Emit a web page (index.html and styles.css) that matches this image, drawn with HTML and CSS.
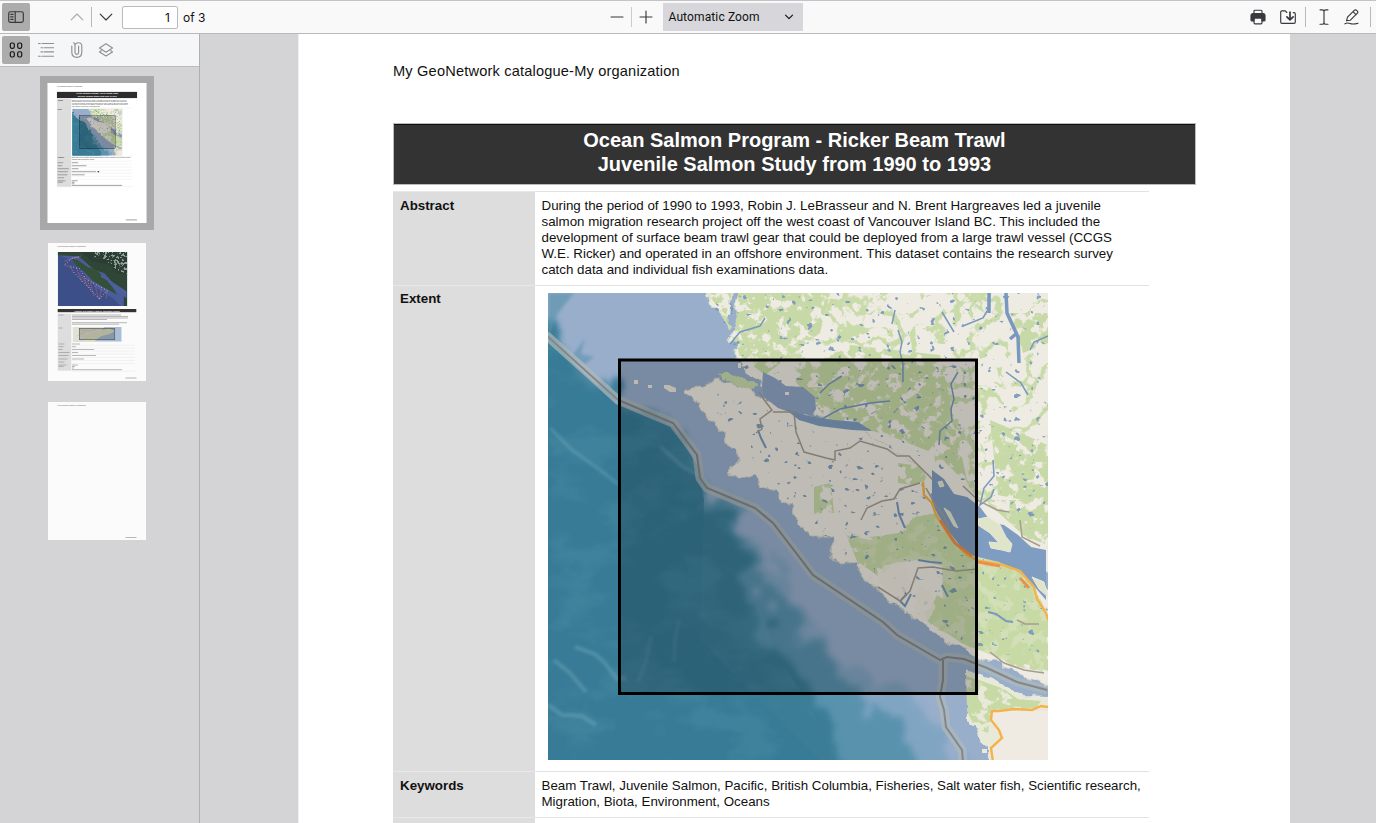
FILE: index.html
```html
<!DOCTYPE html>
<html lang="en">
<head>
<meta charset="utf-8">
<title>My GeoNetwork catalogue</title>
<link rel="stylesheet" href="styles.css">
</head>
<body>
<header class="toolbar">
  <div class="tools tools-left">
    <button class="icon-btn active" aria-label="Toggle sidebar"><svg viewBox="0 0 16 16"><rect x=".7" y="2.7" width="14.6" height="10.6" rx="1.8"/><path d="M7.2 2.7v10.6M2.7 5.3h2.4M2.7 7.8h2.4M2.7 10.3h2.4"/></svg></button>
    <button class="icon-btn previous" aria-label="Previous"><svg viewBox="0 0 16 16"><path d="M2.2 10.8 8 5l5.8 5.8"/></svg></button>
    <span class="separator"></span>
    <button class="icon-btn next" aria-label="Next"><svg viewBox="0 0 16 16"><path d="m2.2 5.2 5.8 5.8 5.8-5.8"/></svg></button>
    <span class="page-input">1</span><span class="page-count">of 3</span>
  </div>
  <div class="tools tools-middle">
    <button class="icon-btn zoom-btn" aria-label="Zoom out"><svg viewBox="0 0 16 16"><path d="M2 8h12"/></svg></button>
    <span class="separator pale"></span>
    <button class="icon-btn zoom-btn" aria-label="Zoom in"><svg viewBox="0 0 16 16"><path d="M2 8h12M8 2v12"/></svg></button>
    <span class="zoom-select"><span>Automatic Zoom</span><svg viewBox="0 0 10 10"><path d="m1.500 3.200 3.500 3.500 3.500-3.500"/></svg></span>
  </div>
  <div class="tools tools-right">
    <button class="icon-btn" aria-label="Print"><svg viewBox="0 0 16 16"><path class="solid" d="M3 4.5h10a2 2 0 0 1 2 2V11a1 1 0 0 1-1 1h-2V9H4v3H2a1 1 0 0 1-1-1V6.500a2 2 0 0 1 2-2z"/><path d="M4 4.500V2.200q0-1 1-1h6q1 0 1 1v2.300M4 9h8v4.800q0 1-1 1H5q-1 0-1-1z"/></svg></button>
    <button class="icon-btn save" aria-label="Save"><svg viewBox="0 0 16 16"><path d="M6.800 3.500 5.300 1.800H2q-1.300 0-1.300 1.300v9.800q0 1.400 1.300 1.400h12q1.300 0 1.300-1.400V5q0-1.400-1.300-1.400h-.8"/><path class="heavy" d="M10 3v7.500M6.900 7.800 10 10.900l3.100-3.100"/></svg></button>
    <span class="separator"></span>
    <button class="icon-btn cursor" aria-label="Text"><svg viewBox="0 0 16 16"><path d="M4 .8h2q2 0 2 1.800v10.800q0 1.800-2 1.800H4M12 .8h-2q-2 0-2 1.800M12 15.200h-2q-2 0-2-1.800"/></svg></button>
    <button class="icon-btn" aria-label="Draw"><svg viewBox="0 0 16 16"><path d="m2.500 11.800 1-3.600 7-7q1-.8 2 .1l.9.9q.9 1 0 2l-7 7zM9 2.700l3 3M1 14.800q2-1.500 5-.3t8-.3"/></svg></button>
    <span class="separator"></span>
  </div>
</header>

<div class="viewer">
  <aside class="sidebar">
    <nav class="side-tabs">
      <button class="icon-btn active tiles" aria-label="Thumbnails"><svg viewBox="0 0 16 16"><rect x="2.300" y="1" width="4" height="5.300" rx="1.500"/><rect x="9.700" y="1" width="4" height="5.300" rx="1.500"/><rect x="2.300" y="9.700" width="4" height="5.300" rx="1.500"/><rect x="9.700" y="9.700" width="4" height="5.300" rx="1.500"/></svg></button>
      <button class="icon-btn muted" aria-label="Outline"><svg viewBox="0 0 16 16"><path d="M.3 1.500h2M4 1.500h12M3 5.700h2M6.500 5.700H16M3 9.900h2M6.500 9.900H16M.3 14.200h2M4 14.200h12"/></svg></button>
      <button class="icon-btn muted" aria-label="Attachments"><svg viewBox="0 0 16 16"><path d="M10.600 4v6.500q0 1.900-1.800 1.900T7 10.500V3.700q0-3-1.600-3M7 4q0-3.300 3.400-3.300T13.800 4v6q0 5.300-5 5.300T3.800 10V4"/></svg></button>
      <button class="icon-btn muted" aria-label="Layers"><svg viewBox="0 0 16 16"><path d="M8 1.800 14.500 6 8 10.200 1.500 6zM3.200 8.700 1.500 9.900 8 14l6.500-4.100-1.700-1.200"/></svg></button>
    </nav>
    <div class="thumbs">
      <div class="thumb-frame selected">
        <svg class="thumb" viewBox="298.500 34 992 1403">
          <rect x="298" y="34" width="993" height="1403" fill="#fff"/>
          <text x="393" y="76" class="t-body">My GeoNetwork catalogue-My organization</text>
          <rect x="393" y="123" width="803" height="62" fill="#2c2c2c"/>
          <text x="795" y="148" class="t-title">Ocean Salmon Program - Ricker Beam Trawl</text>
          <text x="795" y="172" class="t-title">Juvenile Salmon Study from 1990 to 1993</text>
          <rect x="393" y="191" width="142" height="882" fill="#ddd"/>
          <g class="t-body">
            <text x="541" y="210">During the period of 1990 to 1993, Robin J. LeBrasseur and N. Brent Hargreaves led a juvenile</text>
            <text x="541" y="226">salmon migration research project off the west coast of Vancouver Island BC. This included the</text>
            <text x="541" y="242">development of surface beam trawl gear that could be deployed from a large trawl vessel (CCGS</text>
            <text x="541" y="258">W.E. Ricker) and operated in an offshore environment. This dataset contains the research survey</text>
            <text x="541" y="274">catch data and individual fish examinations data.</text>
            <text x="541" y="790">Beam Trawl, Juvenile Salmon, Pacific, British Columbia, Fisheries, Salt water fish, Scientific research,</text>
            <text x="541" y="806">Migration, Biota, Environment, Oceans</text>
          </g>
          <g class="t-body t-bold"><text x="400" y="210">Abstract</text><text x="400" y="304">Extent</text><text x="400" y="790">Keywords</text></g>
          <use href="#coast-map" x="548" y="293" width="500" height="467"/>
          <g stroke="#8a8a8a" stroke-width="8"><path d="M400 833h56M400 863h46M400 893h112M400 923h104M400 954h98M400 984h65M400 1014h78M400 1029h53M541 833h64M541 863h148M541 893h68M541 923h245M541 954h130M541 1014h60M541 1029h30M541 1044h25M541 1060h505M1084 1406h112"/></g>
          <path d="M800 916h16v14h-16z" fill="#444"/>
          <path d="M393 191h756M393 285h756M393 771h756M393 817h756M393 846h756M393 877h756M393 908h756M393 938h756M393 969h756M393 999h756M393 1073h756" stroke="#ddd" stroke-width="3"/>
        </svg>
      </div>
      <div class="thumb-frame">
        <svg class="thumb" viewBox="0 0 98 138">
          <rect width="98" height="138" fill="#fbfbfb"/>
          <text x="9.500" y="4" class="t-mini">My GeoNetwork catalogue-My organization</text>
          <svg x="9.700" y="9" width="69.600" height="54" viewBox="0 0 208 162">
            <rect width="208" height="162" fill="#3c4f88"/>
            <path d="M0 0h208v162h-20l-20-22-50-30-30-30-24-44L30 20 0 8z" fill="#4a5c99"/>
            <path d="M0 0h208v162h-10V128l-28-30-30-34-30-10-15-13L76 24 62 13 0 10z" fill="#2f4636"/>
            <path d="M40 20l20 4 30 22 20 4 30 24 24 30 14 24-30-16-44-26-26-28-24-20z" fill="#355038"/>
            <path d="m130 66 34 24 42 28v20l-26-14-34-40-18-10z" fill="#4b5f9d"/>
            <path d="M72 0h136v68l-30-6-24-24-54-12z" fill="#2c3e34"/>
            <g fill="#8fa097" filter="url(#snow)"><path d="M110 0h98v65l-32-10-30-28-36-10z"/></g>
            <path d="M20 27l48-15M18 38l28 12M40 49l8 15M56 48l16 42M66 64l18 30M77 72l13 34M88 82l12 37M98 93l10 38M112 101l10 38M130 110l-4 32M148 116l-2 22" stroke="#d36d7b" stroke-width="2.500" stroke-dasharray="3 3"/>
            <path d="M22 37 43 18l24-3M38 43l27 7 20 31 30 17 34 18-25 25M48 61l30 31 35 36 13 14" fill="none" stroke="#f2dfe2" stroke-width="3" stroke-dasharray="2 7"/>
          </svg>
          <rect x="9.700" y="66" width="78.600" height="3.200" fill="#333"/>
          <text x="49" y="68.500" class="t-mini t-white">Outdoor Recreation Features, Maritimes Region</text>
          <rect x="9.700" y="70.700" width="13.600" height="57" fill="#ddd"/>
          <svg x="24.700" y="84" width="49" height="14.700" viewBox="0 0 147 44"><rect width="147" height="44" fill="#a9bfd6"/><path d="M0 0h95l-8 11-23 8-25 13-19 12H0z" fill="#e1e2d3"/><path d="m24 44 20-18 35-13 28-9 20 8-16 9-27 7-21 16z" fill="#dfe3c4"/><path d="m20 8 30 4 25-7M10 28l27-14" stroke="#d6ad79" fill="none"/><rect x="20" y="4" width="106" height="34" fill="#0003" stroke="#555" stroke-width="2"/></svg>
          <path d="M10.500 72h5M10.500 85h4M10.500 101h6M10.500 103.700h5M10.500 106.500h4M10.500 109.500h11M10.500 112.500h10M10.500 116h9M10.500 119h6M10.500 122h8M10.500 123.500h5M24 72h49M24 73.500h56M24 75h56M24 76.500h35M24 79.700h55M24 81.200h47M24 101h8M24 103.700h4M24 106.500h22M24 109.500h6M24 112.500h24M24 116h12M24 122h6M24 123.500h3M24 125h2M24 126.700h50M77.500 135h11" stroke="#999" stroke-width=".7"/>
          <path d="M24 102.300h63M24 105.100h63M24 108h63M24 111h63M24 114.500h63M24 117.500h63M24 120.500h63M24 128h63" stroke="#ddd" stroke-width=".3"/>
        </svg>
      </div>
      <div class="thumb-frame">
        <svg class="thumb" viewBox="0 0 98 138"><rect width="98" height="138" fill="#fbfbfb"/><text x="9.500" y="4" class="t-mini">My GeoNetwork catalogue-My organization</text><path d="M77.500 135.500h11" stroke="#999" stroke-width=".7"/></svg>
      </div>
    </div>
  </aside>

  <main class="canvas">
    <article class="page">
      <p class="catalogue">My GeoNetwork catalogue-My organization</p>
      <h1 class="title"><span>Ocean Salmon Program - Ricker Beam Trawl</span><span>Juvenile Salmon Study from 1990 to 1993</span></h1>
      <section class="record">
        <div class="label">Abstract</div>
        <div class="value">
          <span>During the period of 1990 to 1993, Robin J. LeBrasseur and N. Brent Hargreaves led a juvenile</span>
          <span>salmon migration research project off the west coast of Vancouver Island BC. This included the</span>
          <span>development of surface beam trawl gear that could be deployed from a large trawl vessel (CCGS</span>
          <span>W.E. Ricker) and operated in an offshore environment. This dataset contains the research survey</span>
          <span>catch data and individual fish examinations data.</span>
        </div>
        <div class="label label-extent">Extent</div>
        <div class="value extent">
          <svg class="map" viewBox="0 0 500 467">
            <defs>
              <filter id="snow" x="0" y="0" width="1" height="1"><feTurbulence type="fractalNoise" baseFrequency=".13" numOctaves="3" seed="4"/><feColorMatrix values="0 0 0 0 1 0 0 0 0 1 0 0 0 0 1 14 0 0 0 -7.500"/><feComposite in="SourceGraphic" operator="in"/></filter>
              <filter id="forest" x="0" y="0" width="1" height="1"><feTurbulence type="turbulence" baseFrequency=".035" numOctaves="4" seed="12"/><feColorMatrix values="0 0 0 0 1 0 0 0 0 1 0 0 0 0 1 -14 0 0 0 3.200"/><feComposite in="SourceGraphic" operator="in"/></filter>
              <filter id="forest-dense" x="0" y="0" width="1" height="1"><feTurbulence type="fractalNoise" baseFrequency=".09" numOctaves="4" seed="7"/><feColorMatrix values="0 0 0 0 1 0 0 0 0 1 0 0 0 0 1 12 0 0 0 -4.800"/><feComposite in="SourceGraphic" operator="in"/></filter>
              <filter id="lakes" x="0" y="0" width="1" height="1"><feTurbulence type="fractalNoise" baseFrequency=".14 .17" numOctaves="2" seed="31"/><feColorMatrix values="0 0 0 0 1 0 0 0 0 1 0 0 0 0 1 14 0 0 0 -9.600"/><feComposite in="SourceGraphic" operator="in"/></filter>
              <filter id="ripples" x="0" y="0" width="1" height="1"><feTurbulence type="fractalNoise" baseFrequency=".018 .03" numOctaves="4" seed="9"/><feColorMatrix values="0 0 0 0 1 0 0 0 0 1 0 0 0 0 1 4 0 0 0 -1.900"/><feComposite in="SourceGraphic" operator="in"/></filter>
              <filter id="rough" x="-10%" y="-10%" width="120%" height="120%"><feTurbulence type="fractalNoise" baseFrequency=".09" numOctaves="3" seed="3" result="n"/><feDisplacementMap in="SourceGraphic" in2="n" scale="9" xChannelSelector="R" yChannelSelector="G"/></filter>
              <filter id="shelf" x="-15%" y="-15%" width="130%" height="130%"><feTurbulence type="fractalNoise" baseFrequency=".035" numOctaves="5" seed="5" result="n"/><feDisplacementMap in="SourceGraphic" in2="n" scale="60" xChannelSelector="R" yChannelSelector="G"/><feGaussianBlur stdDeviation="3"/></filter>
              <filter id="soft"><feGaussianBlur stdDeviation="1.500"/></filter>
              <filter id="tile" x="0" y="0" width="1" height="1"><feGaussianBlur stdDeviation=".6"/></filter>
            </defs>
            <symbol id="coast-map" viewBox="548 293 500 467">
              <rect x="548" y="293" width="500" height="467" fill="#98aecb"/>
              <!-- continental slope and deep ocean -->
              <path d="M520 318 618 404 673 427 697 465 706 490 738 512 765 560 790 610 830 650 880 680 905 695 945 730 955 790H500V318z" fill="#79a3bf" opacity=".75" filter="url(#shelf)"/>
              <path d="M520 318 618 404 673 427 697 465 706 490 734 512 755 560 780 610 820 650 860 690 900 725 920 790H500V318z" fill="#4d8ca7" opacity=".75" filter="url(#shelf)"/>
              <path d="M520 318 618 404 673 427 695 465 704 495 730 520 745 570 760 615 790 655 817 690 835 725 860 790H500V318z" fill="#3a7d97" filter="url(#shelf)"/>
              <path d="M548 341 618 404 673 427 697 465 704 500 700 640 820 760H548z" fill="#377b96" opacity=".8"/>
              <path d="M548 341 618 404 673 427 697 465 740 530 770 640 840 760H548z" fill="#5f9eb5" opacity=".22" filter="url(#ripples)"/>
              <path d="M548 293h26l-8 10-9 12-9 23z" fill="#6094ae" opacity=".7" filter="url(#soft)"/>
              <path d="m572 356 13-18-4 16 13 3-9 7z" fill="#5a93ae" opacity=".6" filter="url(#soft)"/>
              <g fill="none" stroke="#a2cbd7" opacity=".25" stroke-width="3" filter="url(#soft)"><path d="m550 428 22 22 28 20 18 14"/><path d="m660 446 22 20 18 10"/><path d="m575 647 20 7 10 9 12 16 9-1M554 660l17 14 15 18M548 705l14 10 20 1 14 9" stroke-width="4"/><path d="m679 620-4 20-1 22M651 636l-5 25-8 21" opacity=".5"/></g>
              <g filter="url(#tile)">
              <rect x="548" y="293" width="500" height="467" fill="none"/>
              <g stroke-linejoin="round" fill="none" stroke="#b0bab9" stroke-width="9" opacity=".7"><path id="border-west" d="m546 335 72 65 55 23 24 32 3 23 7 10 48 20 18 15 17 22 23 30 70 47 14 13 43 25 7-3 17 2 23 9 30 14 30 8"/><path id="border-south" d="m943 660 0 20-3 17 4 13 2 17 16 23 1 12"/></g>
              <!-- mainland -->
              <path d="m707 290 5 18 8 4 5 8 6-6 1-25h5l-3 18 8 12-7 10-7 12 2 3 7-6-1 14 1 9 12 11 10 10 6 10 15 6 17 4 16 8 12 10 6 8-5 10-10 0 18 5 30 6 25 5 15 8 30 26 16 19 12 2 13 15 11 6 14-2 10 10 24 10 6 13 10 14 12 10 22 6V290z" fill="#eeebe2" stroke="#d9dfc8" filter="url(#rough)"/>
              <g filter="url(#forest)"><path d="m712 293 15 15 12-15h309v255l-25-12-18-20-25-15-14-18-30-12-5-50-42-10-50-5-40-15-20-24-45-26z" fill="#c9dba9"/></g>
              <g filter="url(#forest-dense)"><path d="M707 293h25l-6 22-8-8zM738 293h92l-10 40-55 42-26-20-4-25zM790 375l60-30 90 10 28 130-30-30-50-20-60-15zM985 500h63v45l-24-9zM990 420l58 25v60l-50-10zM1010 313h38v30l-25 10z" fill="#c7d9a6"/></g>
              <!-- Vancouver Island -->
              <g filter="url(#rough)">
                <path d="m685 392 15-7 15-6 15 4 20 6 14 10 17 9 26 5 26 11 27 5 15 8 30 21 22 18 10 11 12 18 13 16 8 13 11 15 26 6 22 13 14 14 17 28v80l-16-6-28-12-17-10-23-5-17-11-20-7-12-14-18-11-22-14-11-13-15-10-4-16-16 3-9-7 1-22-22 0-14-12-4-15-13-8-4-10-15-3-5-13-16 4-14-4 12-14-2-10-10-5 2-12-9-3-13-14-8-13z" fill="#eeebe2" stroke="#d6d4ca"/>
                <path d="m966 670 16 5 21 10 17 10 32 1v70H990l-4-19-10-17-8-10-1-22z" fill="#e9e9da"/>
                <path d="m718 375 8-4 18 8 14 7-8 4-20-8z" fill="#cadbab"/>
              </g>
              <g filter="url(#forest-dense)">
                <path d="m844 530 20 8 35-5 15-16 24-4 17 30 23 11 25 7 22 13 14 23 9 18v58l-34-7-27-14-20-5-20-14-17-6-10-12 12-10 14-28 1-17-34-6-18 6-14 18-24-17z" fill="#c7daa5"/>
                <path d="m966 676 16 5 22 8 14 10 23 2-5 7-44 2-4 23-13-5-8-17z" fill="#c7daa5"/>
                <path d="m814 487 16-4 2 10 2 20-20 1zM898 463l22 3 8 14-14 5-16-2z" fill="#c7daa5"/>
              </g>
              <path d="m846 535 24 5 40-10 5-13 25-4 19 30 24 14 42 16 22 42v54l-46-10-34-14-34-20-10-12 20-13-1-34-24-6-22 3-26 6z" fill="#c7daa5" opacity=".7"/>
              <path d="M992 711h56v49h-56l-2-12 12-10-11-18z" fill="#efebe2"/>
              <path d="m710 293 15 8 15-8h308v255l-20-12-35-42-25-10-30-12-90-45-30-14-90-55zM700 390l45 8 55 28 70 12 60 52 30 45 70 34 20 40v60l-85-26-70-44-100-85z" fill="#7998bd" opacity=".9" filter="url(#lakes)"/>
              <!-- rivers and inlets -->
              <g fill="none" stroke="#7998bd" stroke-width="1.500"><path d="m730 344 10-12 20-6 5-8M898 330l4 12-2 10 3 12 0 18M990 293l-1 15-6 10-20 8M942 312l12 20M958 372l-7 12 3 15-3 10 1 12-12 10-1 14M895 310l-3 14M1030 350l4-8 14-6M1006 372l15 11 7 12M993 460l1 16-10 12-4 17 11-8 3-8M820 393l9-9 13-8M820 420l20-11 30-6 20-2"/><path d="m1006 293 1 20 11 24 1 26M1010 339l6-5M989 293v20" stroke-width="3.500"/></g>
              <path d="m763 372 12 6 11 8 17 1 12 10 1 12-4 6-20-2-14-5-14-11-2-10z" fill="#8fa6c5"/>
              <path d="m785 409 24 7 25 4 24 2 14 9-20-1-33-4-20-6M932 470l12 9 10 15 13 3 13 10 12 16 12 2 14 10 13 12 15 3v50l-13-15-14-13-20-10-25-6-12-8-16-20-14-24z" fill="#7f9dc0"/>
              <path d="m978 519 10-2 12 8 6 12 6 7-2 8-8-2-11-2-2-6 10 1-9-10-12-8zM944 508l6 4 8 16-4-2zM1032 577l12 5 4 15-9-8zM938 482l4-1 2 5-4 1z" fill="#dfe5c8" stroke="#ece7dd"/>
              <path d="M634 380h4v4h-4zM648 385h4v3h-4zM664 385h5l7 3v4h-6l-6-4zM738 363h3v5h-3zM785 392h4v3h-4zM982 749h5v4h-5z" fill="#ede8dd"/>
              <path d="M988 612l8 2 10 7 7 1M903 587l3 8-6 6 5 5 6-12M918 560l12 2 12 1M758 430l3 8 5 10M897 502l2 12 6 14M942 585l6 12" fill="none" stroke="#7998bd" stroke-width="2"/>
              <path d="m884 565 18-5 6 13 3 16-13 12-20-20zM920 585l12 10 4 12-10 14-16-3z" fill="#eee9de" opacity=".8" filter="url(#rough)"/>
              <!-- roads and international boundary -->
              <g fill="none" stroke="#a69d92" stroke-width="1.500"><path d="m756 433 6-4-2-10 12-9-7-9-6-9M773 412l21 0 2 20 8 20 22 6 9 2 0-9 15-3 10-7 27 8 10 7 12 0 24 24M861 520l6-12 15-7 12-2 6-10 20-6M926 488l10 18 8 10 5 14M878 587l22 14 10-10 8-23 15-1 23 4 22-2M963 486l16 15 18 9 12 2M990 652l14 11 20 7 20 3M1020 520l2 17 18 9"/><path d="m1017 620 8 4 14 0"/></g>
              <g fill="none" stroke="#85868a" stroke-width="2"><use href="#border-west"/><use href="#border-south"/></g>
              <path d="m923 482 1 13 8 8 4 12 16 25 15 15 13 6 23 4 17 6 14 16 3 12 9 14 4 12 4 14M1048 707l-7-1-9 4-17-1-16 2-7 0-1 9 8 10 3 8-11 10 2 14" fill="none" stroke="#f5b24a" stroke-width="2.400"/>
              <path d="m940 520 15 23 17 13M978 562l22 4M1020 578l9 10" fill="none" stroke="#ee8f48" stroke-width="2.800"/>
              </g>
              <!-- spatial extent -->
              <rect x="619.500" y="360" width="357" height="333.500" fill="#000" fill-opacity=".2" stroke="#000" stroke-width="3"/>
            </symbol>
            <use href="#coast-map" width="500" height="467"/>
          </svg>
        </div>
        <div class="label">Keywords</div>
        <div class="value"><span>Beam Trawl, Juvenile Salmon, Pacific, British Columbia, Fisheries, Salt water fish, Scientific research,</span><span>Migration, Biota, Environment, Oceans</span></div>
        <div class="label"></div><div class="value"></div>
      </section>
    </article>
  </main>
</div>
</body>
</html>
```
FILE: styles.css
```css
* { box-sizing: border-box; }
body { margin: 0; width: 1376px; height: 823px; overflow: hidden; background: #d4d4d7; color: #111; font-family: "Liberation Sans", Arial, sans-serif; display: flex; flex-direction: column; }
.toolbar { height: 34px; flex: none; background: #f9f9fa; border-top: 1px solid #c4c4c6; border-bottom: 1px solid #b8b8b8; display: flex; justify-content: space-between; padding: 0 5px 0 2px; font-family: Inter, sans-serif; font-size: 12px; }
.tools { display: flex; align-items: center; }
.tools-left { width: 300px; }
.tools-middle { margin-right: 141px; }
.icon-btn { width: 28px; height: 28px; padding: 0; border: 0; border-radius: 2px; background: none; display: grid; place-items: center; color: #38383d; flex: none; }
.icon-btn svg { width: 16px; height: 16px; }
.icon-btn svg, .zoom-select svg { fill: none; stroke: currentColor; stroke-width: 1.15; stroke-linecap: round; stroke-linejoin: round; }
.icon-btn .solid { fill: currentColor; }
.icon-btn .heavy { stroke-width: 1.7; }
.active { background: #acacac; }
.previous { margin-left: 33px; color: #aaa; }
.separator { width: 1px; height: 20px; background: #b8b8b8; flex: none; }
.separator.pale { background: #ccc; }
.page-input { width: 56px; height: 23px; margin-left: 2px; border: 1px solid #bbb; border-radius: 2px; background: #fff; text-align: right; line-height: 21px; padding-right: 7px; }
.page-count { margin-left: 5px; }
.zoom-select { width: 140px; height: 28px; margin-left: 3px; padding: 0 9px 0 6px; background: #d7d7db; display: flex; align-items: center; justify-content: space-between; font-family: Roboto, sans-serif; font-size: 12px; letter-spacing: .12px; }
.zoom-select svg { width: 10px; height: 10px; }
.save { margin-left: 2px; margin-right: 3px; }
.cursor { margin-left: 4px; }
.tools-right .separator:last-child { margin-left: 4px; }
.viewer { flex: 1; min-height: 0; display: flex; }
.sidebar { width: 200px; flex: none; border-right: 1px solid #b0b0b1; }
.side-tabs { height: 33px; border-bottom: 1px solid #bbb; background: #f5f6f8; display: flex; align-items: center; gap: 2px; padding-left: 2px; }
.tiles { color: #111; }
.muted { color: #909093; }
.thumbs { padding-top: 9px; display: flex; flex-direction: column; align-items: center; gap: 5px; padding-right: 5px; }
.thumb-frame { width: 114px; height: 154px; padding: 8px; }
.selected { background: #a8a8a9; padding: 7px; }
.thumb { display: block; width: 98px; height: 138px; }
.selected .thumb { width: 100px; height: 140px; }
.t-body { font-size: 13.3px; fill: #333; }
.t-bold { font-weight: bold; }
.t-title { font-size: 20px; font-weight: bold; fill: #fff; text-anchor: middle; }
.t-mini { font-size: 1.48px; fill: #444; }
.t-white { fill: #fff; font-size: 2px; font-weight: bold; text-anchor: middle; }
.canvas { flex: 1; padding-left: 98px; overflow: hidden; }
.page { width: 992px; height: 789px; background: #fff; border-left: 1px solid #eee; padding: 28px 0 0 94px; }
.catalogue { margin: 0; font-size: 14.6px; line-height: 18px; height: 61px; letter-spacing: .18px; }
.title { width: 803px; height: 62px; margin: 0 0 6px; background: #333; border: 1px solid #bbb; box-shadow: inset 0 1px #111; color: #fff; padding-top: 4px; text-align: center; font-size: 20px; line-height: 24px; }
.title span, .value span { display: block; white-space: nowrap; }
.record { width: 756px; display: grid; grid-template-columns: 142px 614px; grid-template-rows: 94px 486px 46px 10px; font-size: 13.33px; line-height: 16px; }
.label { background: #ddd; border-top: 1px solid #e8e8e8; font-weight: bold; padding: 6px 7px; }
.label-extent { padding-top: 5px; }
.value { border-top: 1px solid #e2e2e2; padding: 6px 6.5px; }
.extent { padding: 7px 13px; }
.map { display: block; width: 500px; height: 467px; }
```
